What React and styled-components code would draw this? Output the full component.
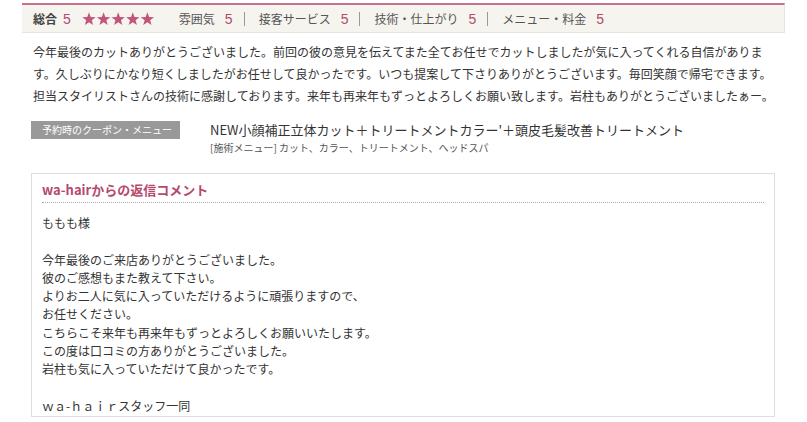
import React from "react";
import styled, { createGlobalStyle } from "styled-components";

const Global = createGlobalStyle`
  html, body { margin: 0; padding: 0; background: #fff; }
  body {
    font-family: "Liberation Sans", "Noto Sans CJK JP", sans-serif;
    color: #333;
  }
`;

const Page = styled.div`
  width: 763px;
  padding: 3px 22px 0 22px;
`;

const RatingBar = styled.div`
  display: flex;
  align-items: center;
  height: 27px;
  padding-left: 11px;
  background: #f6f4ef;
  border-top: 2px solid #c8718a;
  border-bottom: 1px solid #e6e3dd;
  border-right: 1px solid #e6e3dd;
  font-size: 12px;
  color: #555;
`;

const Label = styled.span`
  font-weight: ${(p) => (p.$strong ? 700 : 400)};
  color: ${(p) => (p.$strong ? "#444" : "#555")};
`;

const Score = styled.span`
  font-family: "Liberation Sans", sans-serif;
  font-size: 14px;
  color: #b5496f;
  margin-left: ${(p) => (p.$tight ? "6px" : "10px")};
`;

const Sep = styled.span`
  width: 1px;
  height: 14px;
  background: #999;
  margin: 0 14px 0 11px;
`;

const Stars = styled.svg`
  margin: 0 24px 0 11px;
  display: block;
`;

const ReviewText = styled.p`
  margin: 8px 0 0 0;
  padding: 0 5px 0 11px;
  font-size: 12px;
  line-height: 22px;
  color: #333;
  font-family: "Noto Sans CJK JP", sans-serif;
`;

const CouponRow = styled.div`
  display: flex;
  align-items: flex-start;
  margin-top: 14px;
  padding-left: 9px;
`;

const Badge = styled.div`
  width: 149px;
  height: 18px;
  flex: none;
  background: #999;
  color: #fff;
  font-size: 10px;
  line-height: 18px;
  padding-left: 11px;
  box-sizing: border-box;
  font-family: "Noto Sans CJK JP", sans-serif;
`;

const CouponInfo = styled.div`
  margin-left: 30px;
  font-family: "Noto Sans CJK JP", sans-serif;
`;

const CouponTitle = styled.div`
  font-size: 13px;
  line-height: 18px;
  color: #333;
`;

const CouponSub = styled.div`
  font-size: 10px;
  line-height: 17px;
  color: #555;
`;

const ReplyBox = styled.div`
  margin: 17px 0 0 9px;
  width: 744px;
  box-sizing: border-box;
  border: 1px solid #dddddd;
  padding: 7px 10px 1px 10px;
  font-family: "Noto Sans CJK JP", sans-serif;
`;

const ReplyTitle = styled.div`
  font-size: 13px;
  font-weight: 700;
  line-height: 18px;
  color: #b5496f;
  padding-bottom: 3px;
  border-bottom: 1px dotted #aaa;
`;

const ReplyBody = styled.div`
  margin-top: 11px;
  font-size: 12px;
  line-height: 18.3px;
  color: #333;
  white-space: pre-line;
`;

function StarRow() {
  const pts = (cx) => {
    const r1 = 7, r2 = 2.9, cy = 7.3;
    const out = [];
    for (let i = 0; i < 10; i++) {
      const a = (Math.PI / 5) * i - Math.PI / 2;
      const r = i % 2 === 0 ? r1 : r2;
      out.push(`${(cx + r * Math.cos(a)).toFixed(2)},${(cy + r * Math.sin(a)).toFixed(2)}`);
    }
    return out.join(" ");
  };
  return (
    <Stars width="73" height="14" viewBox="0 0 73 14">
      {[0, 1, 2, 3, 4].map((i) => (
        <polygon key={i} points={pts(7 + i * 14.6)} fill="#c0577b" />
      ))}
    </Stars>
  );
}

const categories = [
  ["雰囲気", 5],
  ["接客サービス", 5],
  ["技術・仕上がり", 5],
  ["メニュー・料金", 5],
];

const reply = `ももも様

今年最後のご来店ありがとうございました。
彼のご感想もまた教えて下さい。
よりお二人に気に入っていただけるように頑張りますので、
お任せください。
こちらこそ来年も再来年もずっとよろしくお願いいたします。
この度は口コミの方ありがとうございました。
岩柱も気に入っていただけて良かったです。

ｗａ-ｈａｉｒスタッフ一同`;

export default function App() {
  return (
    <>
      <Global />
      <Page>
        <RatingBar>
          <Label $strong>総合</Label>
          <Score $tight>5</Score>
          <StarRow />
          {categories.map(([name, v], i) => (
            <React.Fragment key={name}>
              <Label>{name}</Label>
              <Score>{v}</Score>
              {i < categories.length - 1 && <Sep />}
            </React.Fragment>
          ))}
        </RatingBar>
        <ReviewText>
          今年最後のカットありがとうございました。前回の彼の意見を伝えてまた全てお任せでカットしましたが気に入ってくれる自信があります。久しぶりにかなり短くしましたがお任せして良かったです。いつも提案して下さりありがとうございます。毎回笑顔で帰宅できます。担当スタイリストさんの技術に感謝しております。来年も再来年もずっとよろしくお願い致します。岩柱もありがとうございましたぁー。
        </ReviewText>
        <CouponRow>
          <Badge>予約時のクーポン・メニュー</Badge>
          <CouponInfo>
            <CouponTitle>NEW小顔補正立体カット＋トリートメントカラー'＋頭皮毛髪改善トリートメント</CouponTitle>
            <CouponSub>[施術メニュー] カット、カラー、トリートメント、ヘッドスパ</CouponSub>
          </CouponInfo>
        </CouponRow>
        <ReplyBox>
          <ReplyTitle>wa-hairからの返信コメント</ReplyTitle>
          <ReplyBody>{reply}</ReplyBody>
        </ReplyBox>
      </Page>
    </>
  );
}
